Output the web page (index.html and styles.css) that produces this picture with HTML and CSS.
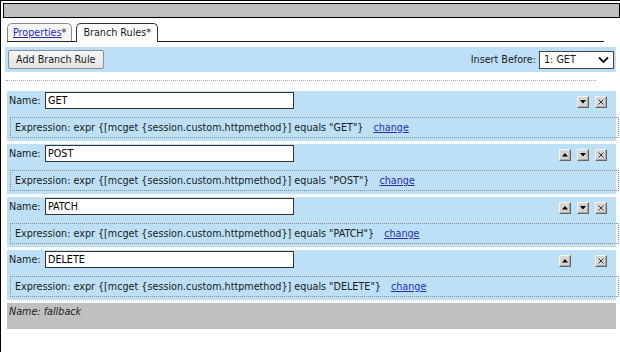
FILE: index.html
```html
<!DOCTYPE html>
<html lang="en">
  <head>
    <meta charset="UTF-8" />
    <meta name="viewport" content="width=device-width, initial-scale=1.0" />
    <title>Branch Rules</title>
    <link rel="stylesheet" href="styles.css">
  </head>
  <body>
    <div class="topbar"></div>
    <div class="tabs">
      <span class="tab"><a href="#">Properties</a>*</span>
      <span class="tab active">Branch Rules*</span>
    </div>
    <div class="content">
      <div class="toolbar">
        <button class="add-btn">Add Branch Rule</button>
        <div class="insert">
          <span>Insert Before:</span>
          <span class="select">1: GET
            <svg width="11" height="8" viewBox="0 0 11 8"><path d="M1 1.5 L5.5 6 L10 1.5" fill="none" stroke="#111" stroke-width="1.8"/></svg>
          </span>
        </div>
      </div>
      <div class="divider"></div>

      <div class="rule">
        <div class="name-row">
          <label>Name:</label>
          <input type="text" value="GET" />
          <div class="controls">
            <span class="slot"></span>
            <span class="ctl"><svg width="6" height="4" viewBox="0 0 6 4"><path d="M0 0 H6 L3 3.5 Z" fill="#000"/></svg></span>
            <span class="ctl"><svg width="6" height="6" viewBox="0 0 6 6"><path d="M0.5 0.5 L5.5 5.5 M5.5 0.5 L0.5 5.5" stroke="#222" stroke-width="0.9"/></svg></span>
          </div>
        </div>
        <div class="expr">Expression: expr {[mcget {session.custom.httpmethod}] equals "GET"}<a href="#">change</a></div>
      </div>

      <div class="rule">
        <div class="name-row">
          <label>Name:</label>
          <input type="text" value="POST" />
          <div class="controls">
            <span class="ctl"><svg width="6" height="4" viewBox="0 0 6 4"><path d="M0 3.5 H6 L3 0 Z" fill="#000"/></svg></span>
            <span class="ctl"><svg width="6" height="4" viewBox="0 0 6 4"><path d="M0 0 H6 L3 3.5 Z" fill="#000"/></svg></span>
            <span class="ctl"><svg width="6" height="6" viewBox="0 0 6 6"><path d="M0.5 0.5 L5.5 5.5 M5.5 0.5 L0.5 5.5" stroke="#222" stroke-width="0.9"/></svg></span>
          </div>
        </div>
        <div class="expr">Expression: expr {[mcget {session.custom.httpmethod}] equals "POST"}<a href="#">change</a></div>
      </div>

      <div class="rule">
        <div class="name-row">
          <label>Name:</label>
          <input type="text" value="PATCH" />
          <div class="controls">
            <span class="ctl"><svg width="6" height="4" viewBox="0 0 6 4"><path d="M0 3.5 H6 L3 0 Z" fill="#000"/></svg></span>
            <span class="ctl"><svg width="6" height="4" viewBox="0 0 6 4"><path d="M0 0 H6 L3 3.5 Z" fill="#000"/></svg></span>
            <span class="ctl"><svg width="6" height="6" viewBox="0 0 6 6"><path d="M0.5 0.5 L5.5 5.5 M5.5 0.5 L0.5 5.5" stroke="#222" stroke-width="0.9"/></svg></span>
          </div>
        </div>
        <div class="expr">Expression: expr {[mcget {session.custom.httpmethod}] equals "PATCH"}<a href="#">change</a></div>
      </div>

      <div class="rule">
        <div class="name-row">
          <label>Name:</label>
          <input type="text" value="DELETE" />
          <div class="controls">
            <span class="ctl"><svg width="6" height="4" viewBox="0 0 6 4"><path d="M0 3.5 H6 L3 0 Z" fill="#000"/></svg></span>
            <span class="slot"></span>
            <span class="ctl"><svg width="6" height="6" viewBox="0 0 6 6"><path d="M0.5 0.5 L5.5 5.5 M5.5 0.5 L0.5 5.5" stroke="#222" stroke-width="0.9"/></svg></span>
          </div>
        </div>
        <div class="expr">Expression: expr {[mcget {session.custom.httpmethod}] equals "DELETE"}<a href="#">change</a></div>
      </div>

      <div class="fallback">Name: fallback</div>
    </div>
  </body>
</html>
```

FILE: styles.css
```css
html,
body {
  height: 100%;
}
body {
  margin: 0;
  box-sizing: border-box;
  border-top: 1px solid #000;
  border-left: 1px solid #000;
  background-color: #fff;
  font-family: "DejaVu Sans Condensed", "DejaVu Sans", sans-serif;
  font-size: 10.7px;
  color: #1a1a1a;
  overflow: hidden;
}
a {
  color: #1f2fb0;
}
.topbar {
  height: 13px;
  margin: 2px 0 0 2px;
  background-color: #c0c0c0;
  border: 1px solid #000;
}
.tabs {
  display: flex;
  align-items: flex-end;
  gap: 4px;
  height: 19px;
  margin: 4px 16px 0 6px;
  border-bottom: 1px solid #222;
}
.tab {
  height: 17px;
  line-height: 18px;
  padding: 0 5px;
  border: 1px solid #8a8a8a;
  border-bottom: none;
  border-radius: 5px 5px 0 0;
  background-color: #f6f6f6;
}
.tab.active {
  height: 18px;
  margin-bottom: -1px;
  padding: 0 6px;
  background-color: #fff;
  border-color: #333;
}
.content {
  margin: 5px 4px 0 4px;
}
.toolbar {
  display: flex;
  justify-content: space-between;
  align-items: center;
  height: 25px;
  padding: 0 2px 0 3px;
  background-color: #bde0f7;
}
.add-btn {
  height: 19px;
  padding: 0 7px;
  font: inherit;
  color: #1a1a1a;
  border: 1px solid #8c8c8c;
  border-radius: 2px;
  background: linear-gradient(#f7f7f7, #e2e2e2);
}
.insert {
  display: flex;
  align-items: center;
  gap: 3px;
}
.select {
  display: flex;
  justify-content: space-between;
  align-items: center;
  box-sizing: border-box;
  width: 75px;
  height: 18px;
  padding: 0 4px 0 4px;
  background-color: #fff;
  border: 1px solid #444;
}
.divider {
  height: 0;
  margin: 8px 20px 10px 1px;
  border-top: 1px dotted #aaa;
}
.rule {
  box-sizing: border-box;
  height: 50px;
  margin: 0 0 3px 2px;
  padding: 1px 0 0 2px;
  background-color: #bde0f7;
}
.name-row {
  display: flex;
  align-items: center;
  height: 17px;
}
.name-row label {
  width: 36px;
}
.name-row input {
  box-sizing: border-box;
  width: 249px;
  height: 17px;
  margin: 0;
  padding: 0 2px;
  font: inherit;
  color: #000;
  border: 1px solid #333;
  background-color: #fff;
}
.controls {
  display: flex;
  gap: 6px;
  margin: 3px 9px 0 auto;
}
.slot,
.ctl {
  width: 12px;
  height: 12px;
}
.ctl {
  box-sizing: border-box;
  display: flex;
  justify-content: center;
  align-items: center;
  background-color: #d8d6d2;
  border: 1px solid;
  border-color: #f4f4f4 #666 #666 #f4f4f4;
  box-shadow: inset -1px -1px #aaa;
}
.expr {
  display: flex;
  align-items: center;
  box-sizing: border-box;
  height: 21px;
  margin: 8px -3px 0 1px;
  padding-left: 4px;
  border: 1px dotted #888;
}
.expr a {
  margin-left: 10px;
}
.fallback {
  box-sizing: border-box;
  height: 26px;
  margin: 2px 0 0 2px;
  padding: 2px 2px;
  font-style: italic;
  background-color: #c0c0c0;
}
```
